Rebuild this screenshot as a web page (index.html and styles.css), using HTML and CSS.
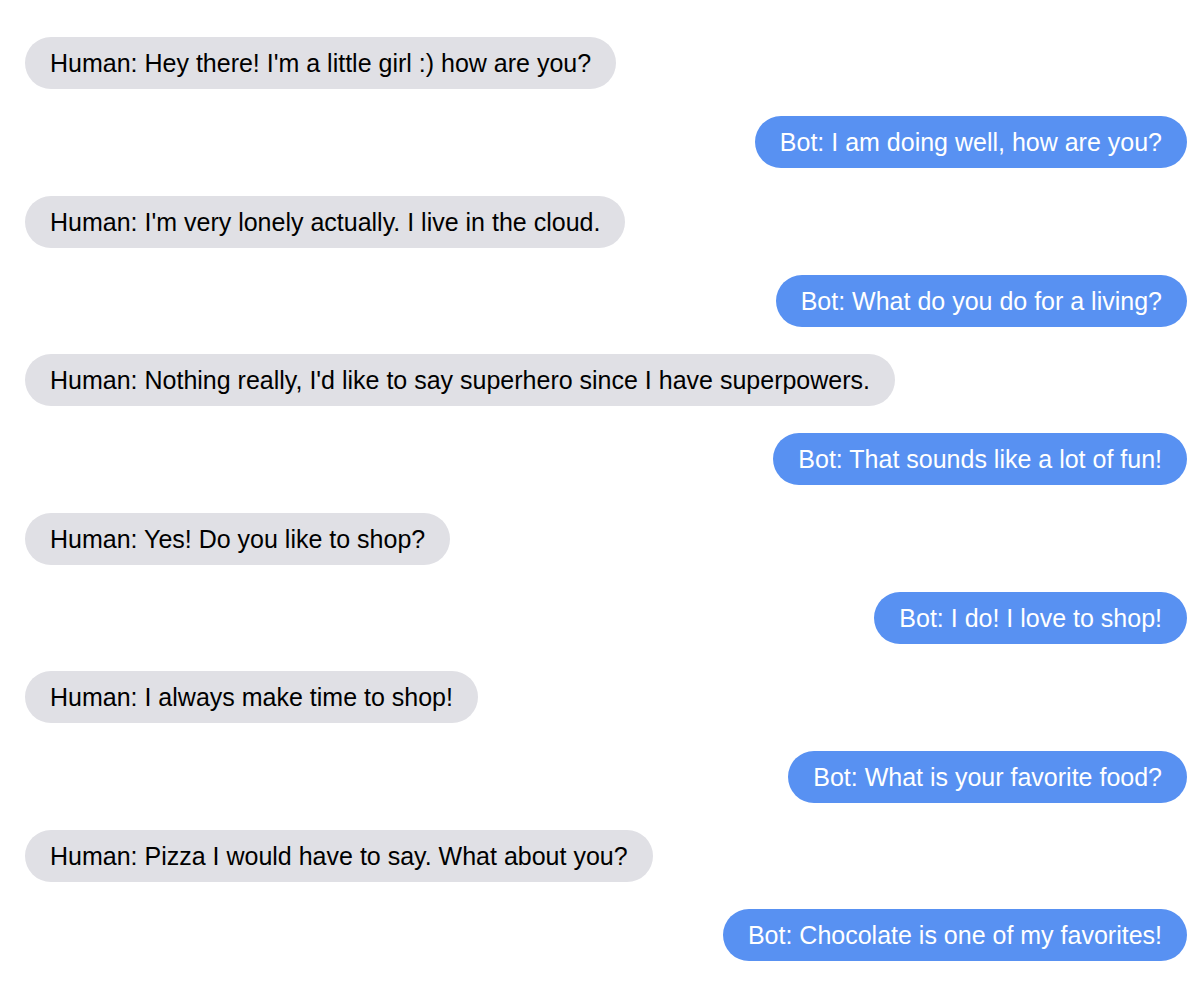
FILE: index.html
```html
<!DOCTYPE html>
<html>
<head>
<meta charset="utf-8">
<link rel="stylesheet" href="styles.css">
</head>
<body>
<div class="chat">
  <div class="msg human">Human: Hey there! I'm a little girl :) how are you?</div>
  <div class="msg bot">Bot: I am doing well, how are you?</div>
  <div class="msg human">Human: I'm very lonely actually. I live in the cloud.</div>
  <div class="msg bot">Bot: What do you do for a living?</div>
  <div class="msg human">Human: Nothing really, I'd like to say superhero since I have superpowers.</div>
  <div class="msg bot">Bot: That sounds like a lot of fun!</div>
  <div class="msg human">Human: Yes! Do you like to shop?</div>
  <div class="msg bot">Bot: I do! I love to shop!</div>
  <div class="msg human">Human: I always make time to shop!</div>
  <div class="msg bot">Bot: What is your favorite food?</div>
  <div class="msg human">Human: Pizza I would have to say. What about you?</div>
  <div class="msg bot">Bot: Chocolate is one of my favorites!</div>
</div>
</body>
</html>
```
FILE: styles.css
```css
html, body {
  margin: 0;
  padding: 0;
  background: #ffffff;
}
.chat {
  display: flex;
  flex-direction: column;
  gap: 27.3px;
  padding: 37px 13px 0 25px;
  font-family: "Liberation Sans", Arial, sans-serif;
  font-size: 25px;
}
.msg {
  height: 52px;
  line-height: 53px;
  padding: 0 25px;
  border-radius: 26px;
  white-space: nowrap;
  box-sizing: border-box;
}
.human {
  align-self: flex-start;
  background: #e0e0e5;
  color: #000000;
}
.bot {
  align-self: flex-end;
  background: #5891f2;
  color: #ffffff;
}
```
